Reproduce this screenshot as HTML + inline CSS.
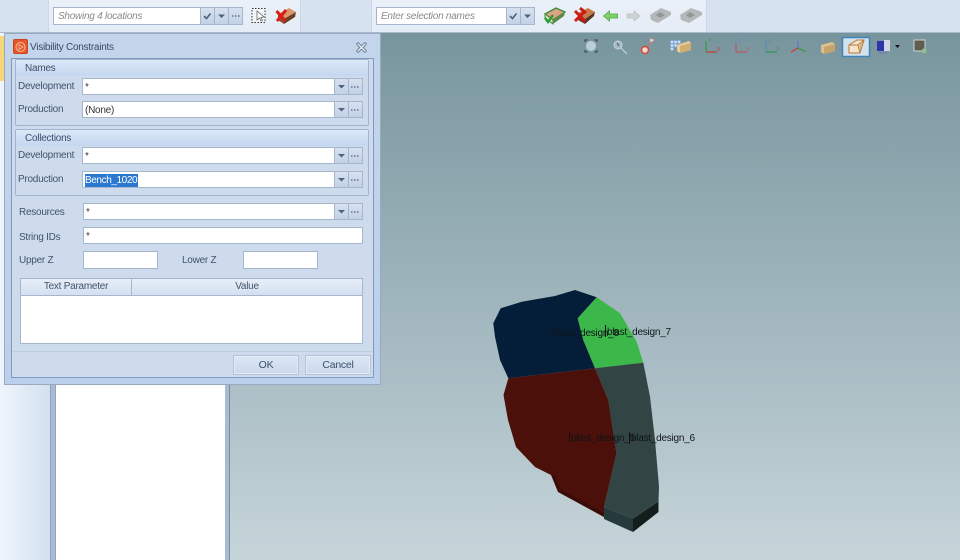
<!DOCTYPE html>
<html><head><meta charset="utf-8"><style>
html,body{margin:0;padding:0}
body{width:960px;height:560px;position:relative;overflow:hidden;background:#d6e2f0;font-family:"Liberation Sans",sans-serif;font-size:10px;letter-spacing:-.25px;color:#44536e}
#r{left:0;top:0;width:960px;height:560px;overflow:hidden;filter:blur(.3px)}
div{position:absolute;box-sizing:border-box}
.i{background:#fff;border:1px solid #a5b6cd;color:#333;padding:2px 2px 0;line-height:14px;white-space:nowrap}
.b{background:linear-gradient(#d6e1ef,#c2d1e5);border:1px solid #a5b6cd;text-align:center}
.l{white-space:nowrap;line-height:12px}
.g{border:1px solid #a0b4cf;border-radius:2px;background:#cddbed}
.h{left:0;right:0;top:0;height:16px;background:linear-gradient(#dbe8f7,#c4d7f0);padding:3px 0 0 9px;line-height:12px;color:#3f4f6b}
.btn{border:1px solid #b3c4da;border-radius:2px;background:linear-gradient(#dce7f4,#c9d8ea);box-shadow:inset 0 0 0 1px #e4edf7;text-align:center;line-height:19px;font-size:10.5px;color:#3f4f6b}
svg{position:absolute;overflow:visible}
</style></head><body><div id="r">

<!-- top toolbars -->
<div style="left:48px;top:0;width:253px;height:33px;background:linear-gradient(#eaf0f8,#e4ecf6);border-left:1px solid #cbd7e7;border-right:1px solid #cbd7e7"></div>
<div style="left:371px;top:0;width:336px;height:33px;background:linear-gradient(#eaf0f8,#e4ecf6);border-left:1px solid #cbd7e7;border-right:1px solid #cbd7e7"></div>
<div style="left:0;top:32px;width:960px;height:1px;background:#a9b9ce"></div>

<div class="i" style="left:53px;top:7px;width:148px;height:18px;color:#8a8a8a;font-style:italic;padding-left:4px">Showing 4 locations</div>
<div class="b" style="left:200px;top:7px;width:15px;height:18px"></div>
<div class="b" style="left:214px;top:7px;width:15px;height:18px"></div>
<div class="b" style="left:228px;top:7px;width:15px;height:18px"></div>
<div class="i" style="left:376px;top:7px;width:131px;height:18px;color:#8a8a8a;font-style:italic;padding-left:4px">Enter selection names</div>
<div class="b" style="left:506px;top:7px;width:15px;height:18px"></div>
<div class="b" style="left:520px;top:7px;width:15px;height:18px"></div>

<!-- viewport -->
<div style="left:229px;top:33px;width:731px;height:527px;background:linear-gradient(#78959e,#a8bcc3 62%,#c6d5da)"></div>

<!-- left side -->
<div style="left:0;top:33px;width:51px;height:527px;background:linear-gradient(90deg,#eef5fd,#d2e0ef)"></div>
<div style="left:0;top:36px;width:4px;height:45px;background:#f6d679"></div>
<div style="left:50px;top:33px;width:6px;height:527px;background:#a9bbd2;border-left:1px solid #8ea2bd;border-right:1px solid #8ea2bd"></div>
<div style="left:56px;top:33px;width:169px;height:527px;background:#fff"></div>
<div style="left:225px;top:33px;width:5px;height:527px;background:#a9bbd2;border-right:1px solid #7f8d9e"></div>

<!-- 3D shape + icons -->
<svg style="left:0;top:0" width="960" height="560" viewBox="0 0 960 560">
<g>
<polygon points="604,507 633,518.5 633,532 604,519" fill="#26393b"/>
<polygon points="633,518.5 658.5,501.5 658.5,512 633,532" fill="#121d1c"/>
<polygon points="575,290 596.7,297.3 577.7,318.3 583.3,340 595,368.3 508.3,378.3 500,360 495,336.7 493.3,323.3 500.7,308.3 521.7,301.7 555,296" fill="#041d38"/>
<polygon points="596.7,297.3 620,313.3 636.7,341.7 643.3,362.7 595,368.3 583.3,340 577.7,318.3" fill="#3cb84a"/>
<polygon points="595,368.3 643.3,362.7 650,396.7 655,440 659,486.7 658.5,501.5 633,518.5 604,507 616.5,453.3 608.3,400" fill="#334445"/>
<polygon points="508.3,378.3 595,368.3 608.3,400 616.5,453.3 604,507 604,517 558,492 551,475 535,467 516,447 508,420 503.5,395" fill="#4a1009"/>
<polygon points="551.7,475 558.3,491.7 604,517 604,513 560,489 555,476" fill="#3a0c07"/>
</g>
<g font-family="Liberation Sans,sans-serif" font-size="10" letter-spacing="-.25" fill="#101418">
<rect x="553" y="326" width="1" height="12" fill="#111"/><text x="555" y="336">blast_design_8</text>
<rect x="605" y="325" width="1" height="12" fill="#111"/><text x="607" y="335">blast_design_7</text>
<rect x="569" y="431" width="1" height="12" fill="#111"/><text x="571" y="441">blast_design_5</text>
<rect x="629" y="432" width="1" height="12" fill="#111"/><text x="631" y="441">blast_design_6</text>
</g>

<!-- toolbar combo glyphs -->
<path d="M204 16l2.5 2.5 4-5" stroke="#4d6283" stroke-width="1.6" fill="none"/>
<polygon points="218,14.5 225,14.5 221.5,18" fill="#4d6283"/>
<path d="M232 16h1.5M235 16h1.5M238 16h1.5" stroke="#4d6283" stroke-width="1.3"/>
<path d="M510 16l2.5 2.5 4-5" stroke="#4d6283" stroke-width="1.6" fill="none"/>
<polygon points="524,14.5 531,14.5 527.5,18" fill="#4d6283"/>

<!-- select icon -->
<rect x="252" y="8.500" width="13" height="14" fill="#f3f6fa" stroke="#333" stroke-dasharray="1.5 1.5"/>
<path d="M257 11v9l2.500-2 1.500 3 1.500-.7-1.500-3 3-.3z" fill="#fff" stroke="#666" stroke-width=".8"/>
<!-- red box icon 1 -->
<polygon points="278,14 289,8 296,12 284,19" fill="#d9976a"/>
<polygon points="278,14 284,19 284,24 278,20" fill="#8c4a2c"/>
<polygon points="284,19 296,12 295,17 284,24" fill="#6e3d28"/>
<path d="M276.5 11l9 10M286 10l-9 11" stroke="#d81f14" stroke-width="3"/>
<!-- green outlined box -->
<polygon points="545,14 556,8 565,12 553,20" fill="#dda183" stroke="#3f8a3a" stroke-width="1.300"/>
<polygon points="545,14 553,20 553,24 545,18" fill="#d7e8c8" stroke="#3f8a3a"/>
<polygon points="553,20 565,12 564,16 553,24" fill="#5c8a4a"/>
<path d="M545 18l3 4 5-7" stroke="#2f9e34" stroke-width="2.400" fill="none"/>
<!-- red box icon 2 -->
<polygon points="578,13 588,8 595,12 585,19" fill="#c77b4a"/>
<polygon points="578,13 585,19 585,24 578,20" fill="#8d2a1e"/>
<polygon points="585,19 595,12 594,16 585,24" fill="#5a3424"/>
<path d="M575 11l10 10M585 11l-10 10M580 8l6 5" stroke="#cf1a12" stroke-width="3"/>
<!-- arrows -->
<path d="M603.500 16l6-5v3h8v4h-8v3z" fill="#7fd36c" stroke="#4da447" stroke-width=".8"/>
<path d="M640 16l-6-5v3h-7v4h7v3z" fill="#cfd3d6" stroke="#bcc1c5" stroke-width=".8"/>
<!-- grey boxes -->
<g fill="#b5b8ba"><polygon points="650,15 661,8 671,12 671,15 658,23 651,20"/><polygon points="680,15 691,8 702,12 702,15 689,23 681,20"/></g>
<g fill="#94979a"><polygon points="656,15 660,12 665,15 660,18"/><polygon points="686,15 690,12 695,15 690,18"/></g>

<!-- viewport icons -->
<circle cx="591" cy="46" r="5" fill="#b9d0dc"/>
<path d="M585 42v-2h2.500M597 42v-2h-2.500M585 50v2h2.500M597 50v2h-2.500" stroke="#444f55" stroke-width="1.300" fill="none"/>
<circle cx="618" cy="45" r="4" fill="#a0b8c2" stroke="#c7d5da"/>
<path d="M621 48l6 6" stroke="#b9c6cc" stroke-width="1.500"/>
<path d="M617 43l2 3" stroke="#556"/>
<circle cx="645" cy="50" r="3.500" fill="#f0d8d0" stroke="#d9483a" stroke-width="1.500"/>
<path d="M648 47l4-7" stroke="#c9746a"/><polygon points="650,38 655,40 650,43" fill="#d7e4ea" stroke="#c9746a" stroke-width=".6"/>
<g fill="#cfe0f5" stroke="#7fa0d6" stroke-width=".6">
<rect x="670.500" y="40.500" width="3" height="3"/><rect x="674" y="40.500" width="3" height="3"/><rect x="677.500" y="40.500" width="3" height="3"/>
<rect x="670.500" y="44" width="3" height="3"/><rect x="674" y="44" width="3" height="3"/>
<rect x="670.500" y="47.500" width="3" height="3"/>
</g>
<polygon points="677,45 689,41 691,43 691,50 680,53 677,51" fill="#e6cd9f"/><polygon points="680,46 691,43 691,50 680,53" fill="#d2ad70"/>
<g fill="none" stroke-width="1.200">
<path d="M706 41v11" stroke="#2aa03a"/><path d="M706 52h11" stroke="#c83a3a"/>
<path d="M736 41v11h11" stroke="#b85a60"/><path d="M736 41v3" stroke="#6a86c4"/>
<path d="M766 41v11" stroke="#5a8ab0"/><path d="M766 52h11" stroke="#2f9a55"/>
<path d="M798 41v7" stroke="#5a78c8"/><path d="M798 48l-7 4" stroke="#cc3a3a"/><path d="M798 48l8 4" stroke="#2aa03a"/>
</g>
<g font-family="Liberation Sans,sans-serif" font-size="5">
<text x="708" y="42" fill="#2aa03a">Y</text><text x="717" y="51" fill="#c83a3a">X</text>
<text x="738" y="43" fill="#6a86c4">Z</text><text x="746" y="51" fill="#c25a5a">X</text>
<text x="768" y="43" fill="#5a8ab0">Z</text><text x="776" y="51" fill="#2f9a55">Y</text>
</g>
<polygon points="821,45 832,42 835,44 835,51 824,54 821,52" fill="#dcc08f"/><polygon points="824,47 835,44 835,51 824,54" fill="#c9a46a"/>
<rect x="842.500" y="37.500" width="27" height="19" fill="#d3e3ee" stroke="#3f83bd" stroke-width="1.500"/>
<polygon points="849,45 857,40 864,40 860,53 849,53" fill="#f7e3c9" stroke="#b57a3a"/>
<path d="M849 45h9l6-5M858 45l2 8" stroke="#b57a3a" fill="none"/>
<polygon points="859,46 863,41 860,52" fill="#e0b585"/>
<rect x="877" y="41" width="10" height="10" fill="#2f35a8"/><rect x="884" y="40" width="6" height="11" fill="#cfd6e6"/><path d="M879 53h8" stroke="#6b78b8"/>
<polygon points="895,45 900,45 897.500,48" fill="#111"/>
<rect x="914" y="40" width="11" height="11" fill="#5f5d50" stroke="#cdd6da"/>
<circle cx="924" cy="51" r="2.500" fill="#8fc08f"/>
</svg>

<!-- dialog -->
<div style="left:4px;top:33px;width:377px;height:352px;background:linear-gradient(#c3d5ea,#bbd0ec);border:1px solid #9aa9bd">
  <div class="l" style="left:25px;top:8px;color:#3a4a68">Visibility Constraints</div>
  <div style="left:8px;top:5px;width:15px;height:15px;background:#e8572a;border:1px solid #c8461e;border-radius:2px"></div>
</div>
<div style="left:11px;top:58px;width:363px;height:320px;background:#cddbed;border:1px solid #7f9abb"></div>
<div style="left:12px;top:351px;width:361px;height:1px;background:#bfcfe2"></div>

<div class="g" style="left:15px;top:59px;width:354px;height:67px"><div class="h">Names</div></div>
<div class="g" style="left:15px;top:129px;width:354px;height:67px"><div class="h">Collections</div></div>

<div class="l" style="left:18px;top:81px">Development</div>
<div class="i" style="left:82px;top:78px;width:253px;height:17px">*</div>
<div class="b" style="left:334px;top:78px;width:15px;height:17px"></div><div class="b" style="left:348px;top:78px;width:15px;height:17px"></div>

<div class="l" style="left:18px;top:104px">Production</div>
<div class="i" style="left:82px;top:101px;width:253px;height:17px">(None)</div>
<div class="b" style="left:334px;top:101px;width:15px;height:17px"></div><div class="b" style="left:348px;top:101px;width:15px;height:17px"></div>

<div class="l" style="left:18px;top:150px">Development</div>
<div class="i" style="left:82px;top:147px;width:253px;height:17px">*</div>
<div class="b" style="left:334px;top:147px;width:15px;height:17px"></div><div class="b" style="left:348px;top:147px;width:15px;height:17px"></div>

<div class="l" style="left:18px;top:174px">Production</div>
<div class="i" style="left:82px;top:171px;width:253px;height:17px"><span style="background:#2a78cf;color:#fff;display:inline-block;line-height:13px;width:53px;overflow:hidden;white-space:nowrap;letter-spacing:-.4px">Bench_1020</span></div>
<div class="b" style="left:334px;top:171px;width:15px;height:17px"></div><div class="b" style="left:348px;top:171px;width:15px;height:17px"></div>

<div class="l" style="left:19px;top:207px">Resources</div>
<div class="i" style="left:83px;top:203px;width:252px;height:17px">*</div>
<div class="b" style="left:334px;top:203px;width:15px;height:17px"></div><div class="b" style="left:348px;top:203px;width:15px;height:17px"></div>

<div class="l" style="left:19px;top:232px">String IDs</div>
<div class="i" style="left:83px;top:227px;width:280px;height:17px">*</div>

<div class="l" style="left:19px;top:255px">Upper Z</div>
<div class="i" style="left:83px;top:251px;width:75px;height:18px"></div>
<div class="l" style="left:182px;top:255px">Lower Z</div>
<div class="i" style="left:243px;top:251px;width:75px;height:18px"></div>

<div style="left:20px;top:278px;width:343px;height:66px;background:#fff;border:1px solid #a5b6cd"></div>
<div style="left:21px;top:279px;width:111px;height:17px;background:linear-gradient(#e6eef8,#d3e0f0);border-right:1px solid #a5b6cd;border-bottom:1px solid #a5b6cd;text-align:center;line-height:16px">Text Parameter</div>
<div style="left:132px;top:279px;width:230px;height:17px;background:linear-gradient(#e6eef8,#d3e0f0);border-bottom:1px solid #a5b6cd;text-align:center;line-height:16px">Value</div>

<div class="btn" style="left:233px;top:355px;width:66px;height:20px">OK</div>
<div class="btn" style="left:305px;top:355px;width:66px;height:20px">Cancel</div>

<svg style="left:0;top:0" width="960" height="560" viewBox="0 0 960 560">
<g fill="#4d6283">
<polygon points="338,85 345,85 341.5,88.5"/><polygon points="338,108 345,108 341.5,111.5"/><polygon points="338,154 345,154 341.5,157.5"/><polygon points="338,178 345,178 341.5,181.5"/><polygon points="338,210 345,210 341.5,213.5"/>
</g>
<g stroke="#4d6283" stroke-width="1.200" stroke-dasharray="1.5 1.5">
<path d="M351 87h9M351 110h9M351 156h9M351 180h9M351 212h9"/>
</g>
<circle cx="20.500" cy="47" r="4.500" fill="none" stroke="#f6c0a0"/>
<polygon points="19,44.500 19,49.500 23,47" fill="none" stroke="#f6c0a0" stroke-width=".8"/>
<path d="M358 44l7 7M365 44l-7 7" stroke="#64748c" stroke-width="3.200" stroke-linecap="round"/>
<path d="M358 44l7 7M365 44l-7 7" stroke="#eef3f9" stroke-width="1.400" stroke-linecap="round"/>
</svg>
</div></body></html>
